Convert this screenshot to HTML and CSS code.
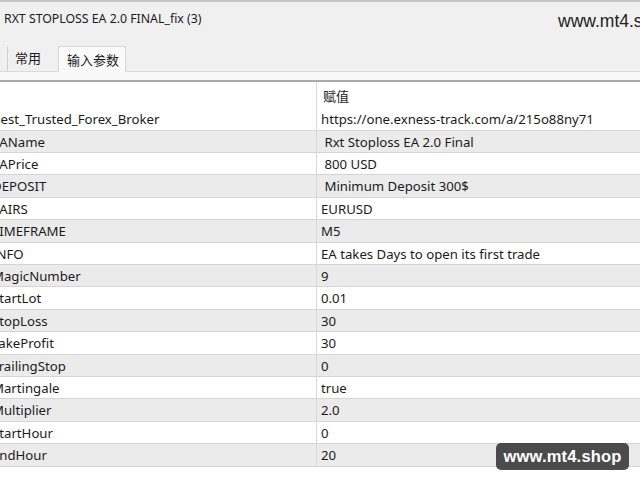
FILE: index.html
```html
<!DOCTYPE html>
<html lang="zh-CN">
<head>
<meta charset="utf-8">
<title>RXT STOPLOSS EA 2.0 FINAL_fix (3)</title>
<link rel="stylesheet" href="styles.css">
</head>
<body>
<div class="window">
  <div class="titlebar">
    <div class="title">RXT STOPLOSS EA 2.0 FINAL_fix (3)</div>
    <div class="site">www.mt4.shop</div>
  </div>
  <div class="tabbar">
    <div class="tab tab-hidden">关于</div>
    <div class="tab">常用</div>
    <div class="tab tab-active">输入参数</div>
  </div>
  <div class="tabstrip"></div>
  <div class="grid">
    <div class="row head"><div class="c1"><span class="hname">变量</span></div><div class="c2">赋值</div></div>
    <div class="row"><div class="c1">Best_Trusted_Forex_Broker</div><div class="c2">https://one.exness-track.com/a/215o88ny71</div></div>
    <div class="row alt"><div class="c1">EAName</div><div class="c2"> Rxt Stoploss EA 2.0 Final</div></div>
    <div class="row"><div class="c1">EAPrice</div><div class="c2"> 800 USD</div></div>
    <div class="row alt"><div class="c1">DEPOSIT</div><div class="c2"> Minimum Deposit 300$</div></div>
    <div class="row"><div class="c1">PAIRS</div><div class="c2">EURUSD</div></div>
    <div class="row alt"><div class="c1">TIMEFRAME</div><div class="c2">M5</div></div>
    <div class="row"><div class="c1">INFO</div><div class="c2">EA takes Days to open its first trade</div></div>
    <div class="row alt"><div class="c1">MagicNumber</div><div class="c2">9</div></div>
    <div class="row"><div class="c1">StartLot</div><div class="c2">0.01</div></div>
    <div class="row alt"><div class="c1">StopLoss</div><div class="c2">30</div></div>
    <div class="row"><div class="c1">TakeProfit</div><div class="c2">30</div></div>
    <div class="row alt"><div class="c1">TrailingStop</div><div class="c2">0</div></div>
    <div class="row"><div class="c1">Martingale</div><div class="c2">true</div></div>
    <div class="row alt"><div class="c1">Multiplier</div><div class="c2">2.0</div></div>
    <div class="row"><div class="c1">StartHour</div><div class="c2">0</div></div>
    <div class="row alt"><div class="c1">EndHour</div><div class="c2">20</div></div>
  </div>
  <div class="watermark">www.mt4.shop</div>
</div>
</body>
</html>
```
FILE: styles.css
```css
html, body {
  margin: 0;
  padding: 0;
  background: #ffffff;
}
body {
  width: 640px;
  height: 480px;
  overflow: hidden;
  font-family: "Noto Sans", "Noto Sans CJK SC", sans-serif;
  font-size: 13.2px;
  color: #1b1b1b;
}
.window {
  position: relative;
  width: 640px;
  height: 480px;
  overflow: hidden;
}
.titlebar {
  box-sizing: border-box;
  height: 38px;
  background: #f0f0f0;
  border-top: 2px solid #c4c4c4;
  display: grid;
  grid-template-columns: 554px 200px;
  align-items: center;
  padding-left: 4px;
  overflow: hidden;
}
.title {
  font-size: 12.3px;
  line-height: 16px;
  margin-top: -3px;
  white-space: nowrap;
}
.site {
  font-family: "Liberation Sans", Arial, sans-serif;
  font-size: 17.5px;
  color: #222;
  white-space: nowrap;
  margin-top: 2px;
}
.tabbar {
  box-sizing: border-box;
  height: 34px;
  background: #f0f0f0;
  padding-top: 8px;
  display: flex;
  align-items: flex-end;
  border-bottom: 1px solid #dadada;
  margin-left: -40px;
}
.tab {
  box-sizing: border-box;
  height: 24px;
  padding: 0 7px;
  border-left: 1px solid #cfcfcf;
  font-family: "Noto Sans CJK SC", sans-serif;
  font-size: 13px;
  line-height: 21px;
  white-space: nowrap;
}
.tab-hidden {
  width: 47px;
  color: transparent;
}
.tab:nth-child(2) {
  width: 51px;
}
.tab-active {
  height: 26px;
  line-height: 23px;
  width: 68px;
  padding-left: 8px;
  background: #fafafa;
  border: 1px solid #d8d8d8;
  border-bottom: none;
  margin-bottom: -1px;
  padding-top: 1px;
}
.tabstrip {
  height: 8px;
  background: #f8f8f8;
  border-bottom: 2px solid #a9a9a9;
}
.grid {
  margin-left: -12px;
  width: 652px;
}
.row {
  box-sizing: border-box;
  height: 22.4px;
  display: grid;
  grid-template-columns: 329px 1fr;
  border-bottom: 1px solid #d5d5d5;
}
.row.alt {
  background: #ebebeb;
}
.row.head {
  height: 26.3px;
  border-bottom: none;
  font-family: "Noto Sans CJK SC", sans-serif;
  font-size: 13px;
}
.c1, .c2 {
  box-sizing: border-box;
  padding-top: 2px;
  line-height: 19.4px;
  white-space: pre;
  overflow: hidden;
}
.c1 {
  padding-left: 4px;
  border-right: 1px solid #d9d9d9;
}
.c2 {
  padding-left: 4px;
}
.head .c1, .head .c2 {
  padding-top: 4px;
  line-height: 20px;
}
.head .c2 {
  padding-left: 6px;
}
.hname {
  display: inline-block;
  margin-left: -21px;
}
.watermark {
  position: absolute;
  left: 496px;
  top: 443px;
  width: 133px;
  height: 27px;
  border-radius: 5px;
  background: rgba(58, 58, 58, 0.9);
  color: #ffffff;
  font-family: "Liberation Sans", Arial, sans-serif;
  font-weight: bold;
  font-size: 16.5px;
  line-height: 27px;
  text-align: center;
  letter-spacing: 0.2px;
}
```
